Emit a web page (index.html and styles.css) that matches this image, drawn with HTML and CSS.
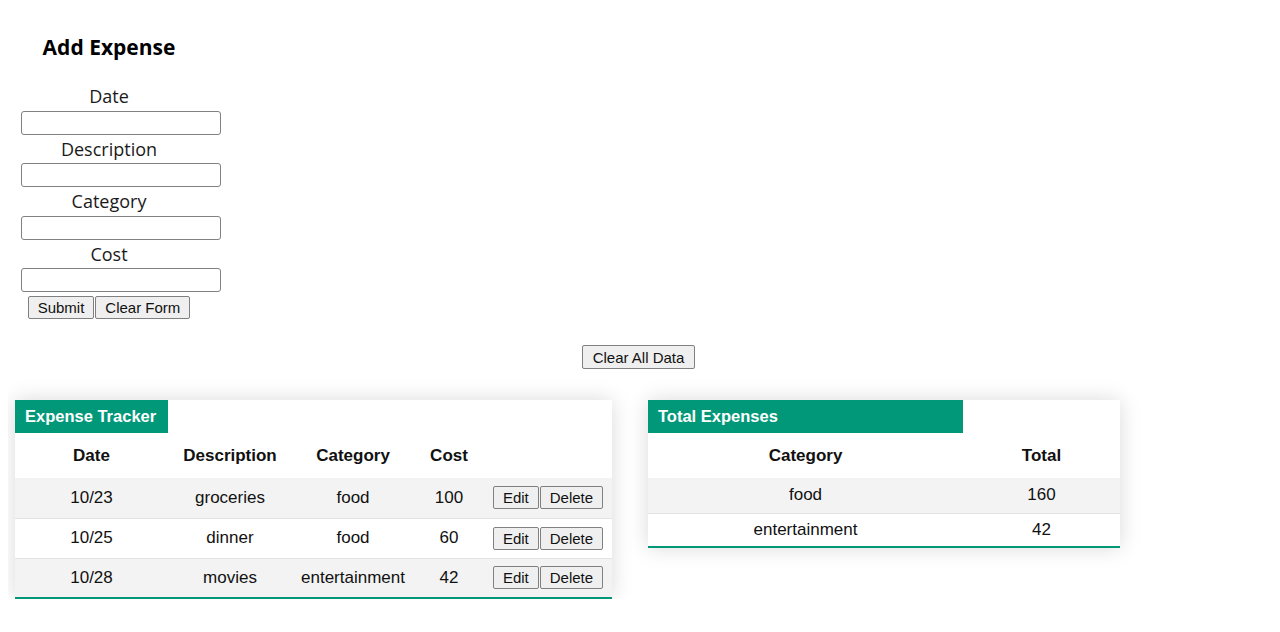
FILE: index.html
```html
<!DOCTYPE html>
<html lang="en">
<head>
<meta charset="utf-8">
<title>Expense Tracker</title>
<link rel="stylesheet" href="styles.css">
</head>
<body>
<div class="form-col">
  <h3 class="form-title">Add Expense</h3>
  <label class="field-label" for="date">Date</label>
  <input class="field" id="date" type="text">
  <label class="field-label" for="desc">Description</label>
  <input class="field" id="desc" type="text">
  <label class="field-label" for="cat">Category</label>
  <input class="field" id="cat" type="text">
  <label class="field-label" for="cost">Cost</label>
  <input class="field" id="cost" type="text">
  <div class="form-actions">
    <button class="btn" type="button">Submit</button>
    <button class="btn" type="button">Clear Form</button>
  </div>
</div>

<div class="clear-all">
  <button class="btn btn-tall" type="button">Clear All Data</button>
</div>

<div class="tables">
  <table class="styled-table expense-table">
    <colgroup>
      <col class="c-date"><col class="c-desc"><col class="c-cat"><col class="c-cost"><col class="c-act">
    </colgroup>
    <thead>
      <tr class="title-row"><th class="title-cell">Expense Tracker</th><th class="blank" colspan="4"></th></tr>
      <tr class="head-row"><th>Date</th><th>Description</th><th>Category</th><th>Cost</th><th></th></tr>
    </thead>
    <tbody>
      <tr><td>10/23</td><td>groceries</td><td>food</td><td>100</td><td><div class="row-actions"><button class="btn" type="button">Edit</button><button class="btn" type="button">Delete</button></div></td></tr>
      <tr><td>10/25</td><td>dinner</td><td>food</td><td>60</td><td><div class="row-actions"><button class="btn" type="button">Edit</button><button class="btn" type="button">Delete</button></div></td></tr>
      <tr><td>10/28</td><td>movies</td><td>entertainment</td><td>42</td><td><div class="row-actions"><button class="btn" type="button">Edit</button><button class="btn" type="button">Delete</button></div></td></tr>
    </tbody>
  </table>

  <table class="styled-table total-table">
    <colgroup>
      <col class="c-tcat"><col class="c-ttot">
    </colgroup>
    <thead>
      <tr class="title-row"><th class="title-cell">Total Expenses</th><th class="blank"></th></tr>
      <tr class="head-row"><th>Category</th><th>Total</th></tr>
    </thead>
    <tbody>
      <tr class="t-first"><td>food</td><td>160</td></tr>
      <tr><td>entertainment</td><td>42</td></tr>
    </tbody>
  </table>
</div>
</body>
</html>
```

FILE: styles.css
```css
* { box-sizing: border-box; }

body {
  margin: 8px;
  background: #ffffff;
  color: #111;
  font-family: "Open Sans", "Noto Sans", sans-serif;
}

.form-col {
  width: 202px;
  text-align: center;
}

.form-title {
  margin: 27px 0 23px;
  font-size: 21px;
  line-height: 24px;
  font-weight: 700;
  color: #000;
}

.field-label {
  display: block;
  font-size: 18px;
  line-height: 28.5px;
  color: #1a1a1a;
}

.field {
  display: block;
  width: 200px;
  height: 24px;
  margin: 0 0 0 13px;
  border: 1px solid #808080;
  border-radius: 3px;
  background: #fff;
  outline: none;
}

.form-actions {
  display: flex;
  justify-content: center;
  gap: 1px;
  margin-top: 4px;
}

.btn {
  font-family: "Liberation Sans", Arial, sans-serif;
  font-size: 15px;
  color: #111;
  height: 23px;
  padding: 0 9px;
  background: #efefef;
  border: 1px solid #808080;
  border-radius: 2px;
  line-height: 21px;
}

.btn-tall {
  height: 24px;
  padding: 0 10px;
}

.clear-all {
  display: flex;
  justify-content: center;
  margin-top: 26px;
  padding-right: 3px;
}

.tables {
  display: flex;
  align-items: flex-start;
  gap: 36px;
  margin-top: 31px;
  padding-left: 7px;
}

.styled-table {
  border-collapse: collapse;
  table-layout: fixed;
  font-family: "Liberation Sans", Arial, sans-serif;
  font-size: 17px;
  color: #111;
  box-shadow: 0 0 20px rgba(0, 0, 0, 0.15);
  background: #fff;
}

.expense-table { width: 597px; }
.total-table { width: 472px; }

.c-date { width: 153px; }
.c-desc { width: 124px; }
.c-cat { width: 122px; }
.c-cost { width: 70px; }
.c-act { width: 128px; }
.c-tcat { width: 315px; }
.c-ttot { width: 157px; }

.styled-table th,
.styled-table td {
  padding: 0;
  text-align: center;
  white-space: nowrap;
}

.title-row th { height: 33px; }

.title-cell {
  background: #009879;
  color: #fff;
  text-align: left !important;
  padding-left: 10px !important;
  font-size: 16.5px;
  font-weight: 700;
}

.head-row th {
  height: 45px;
  font-weight: 700;
}

.styled-table tbody tr {
  border-bottom: 1px solid #e4e4e4;
}

.styled-table tbody tr:nth-child(odd) {
  background: #f3f3f3;
}

.styled-table tbody tr:last-child {
  border-bottom: 2px solid #009879;
}

.expense-table tbody td { height: 40px; }
.total-table tbody td { height: 34px; }
.total-table tbody .t-first td { height: 35px; }

.row-actions {
  display: flex;
  justify-content: center;
  gap: 1px;
}
```
